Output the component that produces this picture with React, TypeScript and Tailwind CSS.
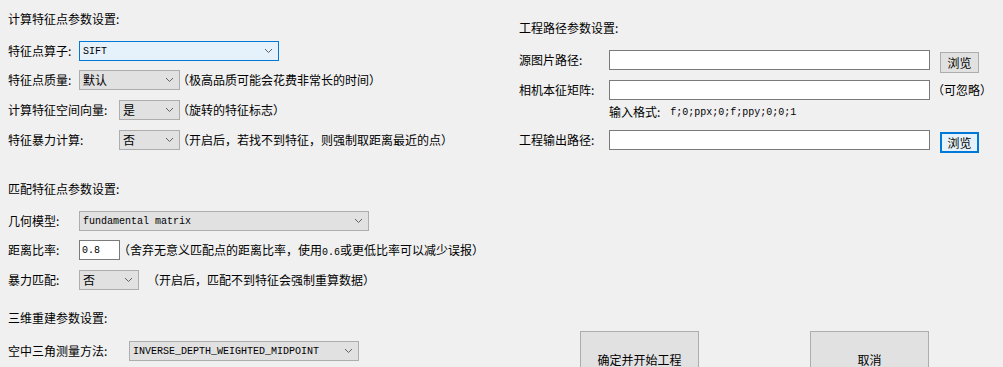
import React from "react";

const cjk = "font-['Noto_Sans_CJK_SC',sans-serif]";
const mono = "font-['Liberation_Mono',monospace] text-[10px]";

function Chevron() {
  return (
    <svg width="9" height="6" viewBox="0 0 9 6" className="shrink-0">
      <polyline points="1,1 4.5,4.5 8,1" fill="none" stroke="#606060" strokeWidth="1" />
    </svg>
  );
}

function Combo({
  w,
  text,
  isMono,
  focused,
}: {
  w: string;
  text: string;
  isMono?: boolean;
  focused?: boolean;
}) {
  return (
    <div
      className={`${w} h-[20px] flex items-center justify-between pl-[3px] pr-[5px] border ${
        focused ? "border-[#0078d7] bg-[#e5f1fb]" : "border-[#adadad] bg-[#e1e1e1]"
      }`}
    >
      <span className={isMono ? mono : "text-[12px]"}>{text}</span>
      <Chevron />
    </div>
  );
}

function Row({ label, lw, children }: { label: string; lw: string; children: React.ReactNode }) {
  return (
    <div className="flex items-center h-[20px]">
      <span className={`${lw} shrink-0 text-[12px]`}>{label}</span>
      {children}
    </div>
  );
}

function Hint({ text, ml }: { text: string; ml: string }) {
  return <span className={`${ml} text-[12px] whitespace-nowrap`}>{text}</span>;
}

function BrowseBtn({ focused }: { focused?: boolean }) {
  return (
    <div
      className={`ml-[10px] mt-[2px] w-[39px] h-[21px] flex items-center justify-center text-[12px] self-start ${
        focused ? "border-2 border-[#0078d7] bg-[#e5f1fb]" : "border border-[#adadad] bg-[#e1e1e1]"
      }`}
    >
      浏览
    </div>
  );
}

function PathInput() {
  return <div className="w-[321px] h-[20px] bg-white border border-[#7a7a7a]" />;
}

export default function App() {
  return (
    <div className={`w-[1003px] h-[367px] overflow-hidden bg-[#f0f0f0] text-black flex ${cjk}`}>
      {/* left: feature / matching / reconstruction params */}
      <div className="w-[500px] shrink-0 pl-[8px] flex flex-col">
        <div className="mt-[9px] h-[20px] flex items-center text-[12px]">计算特征点参数设置:</div>
        <div className="mt-[12px]">
          <Row label="特征点算子:" lw="w-[71px]">
            <Combo w="w-[200px]" text="SIFT" isMono focused />
          </Row>
        </div>
        <div className="mt-[9px]">
          <Row label="特征点质量:" lw="w-[71px]">
            <Combo w="w-[101px]" text="默认" />
            <Hint ml="-ml-[3px]" text="（极高品质可能会花费非常长的时间）" />
          </Row>
        </div>
        <div className="mt-[10px]">
          <Row label="计算特征空间向量:" lw="w-[111px]">
            <Combo w="w-[61px]" text="是" />
            <Hint ml="-ml-[3px]" text="（旋转的特征标志）" />
          </Row>
        </div>
        <div className="mt-[10px]">
          <Row label="特征暴力计算:" lw="w-[111px]">
            <Combo w="w-[61px]" text="否" />
            <Hint ml="-ml-[3px]" text="（开启后，若找不到特征，则强制取距离最近的点）" />
          </Row>
        </div>

        <div className="mt-[29px] h-[20px] flex items-center text-[12px]">匹配特征点参数设置:</div>
        <div className="mt-[12px]">
          <Row label="几何模型:" lw="w-[71px]">
            <Combo w="w-[290px]" text="fundamental matrix" isMono />
          </Row>
        </div>
        <div className="mt-[9px]">
          <Row label="距离比率:" lw="w-[71px]">
            <div className="w-[41px] h-[20px] bg-white border border-[#7a7a7a] flex items-center pl-[2px]">
              <span className={mono}>0.8</span>
            </div>
            <span className="-ml-[2px] text-[12px] whitespace-nowrap">
              （舍弃无意义匹配点的距离比率，使用<span className={mono}>0.6</span>或更低比率可以减少误报）
            </span>
          </Row>
        </div>
        <div className="mt-[10px]">
          <Row label="暴力匹配:" lw="w-[71px]">
            <Combo w="w-[60px]" text="否" />
            <Hint ml="ml-[8px]" text="（开启后，匹配不到特征会强制重算数据）" />
          </Row>
        </div>

        <div className="mt-[18px] h-[20px] flex items-center text-[12px]">三维重建参数设置:</div>
        <div className="mt-[13px]">
          <Row label="空中三角测量方法:" lw="w-[121px]">
            <Combo w="w-[230px]" text="INVERSE_DEPTH_WEIGHTED_MIDPOINT" isMono />
          </Row>
        </div>
      </div>

      {/* right: project paths + actions */}
      <div className="flex-1 flex flex-col">
        <div className="pl-[19px] flex flex-col">
          <div className="mt-[18px] h-[20px] flex items-center text-[12px]">工程路径参数设置:</div>
          <div className="mt-[12px] flex h-[20px]">
            <span className="w-[90px] text-[12px] leading-[20px]">源图片路径:</span>
            <PathInput />
            <BrowseBtn />
          </div>
          <div className="mt-[10px] flex h-[20px]">
            <span className="w-[90px] text-[12px] leading-[20px]">相机本征矩阵:</span>
            <PathInput />
            <span className="ml-[2px] text-[12px] leading-[20px]">（可忽略）</span>
          </div>
          <div className="mt-[4px] h-[16px] pl-[90px] flex items-center text-[12px] whitespace-nowrap">
            输入格式:<span className={`ml-[10px] ${mono}`}>f;0;ppx;0;f;ppy;0;0;1</span>
          </div>
          <div className="mt-[10px] flex h-[20px]">
            <span className="w-[90px] text-[12px] leading-[20px]">工程输出路径:</span>
            <PathInput />
            <BrowseBtn focused />
          </div>
        </div>
        <div className="mt-[181px] pl-[80px] flex gap-[111px]">
          <div className="w-[119px] h-[58px] shrink-0 border border-[#adadad] bg-[#e1e1e1] flex items-center justify-center text-[12px]">
            确定并开始工程
          </div>
          <div className="w-[119px] h-[58px] shrink-0 border border-[#adadad] bg-[#e1e1e1] flex items-center justify-center text-[12px]">
            取消
          </div>
        </div>
      </div>
    </div>
  );
}
